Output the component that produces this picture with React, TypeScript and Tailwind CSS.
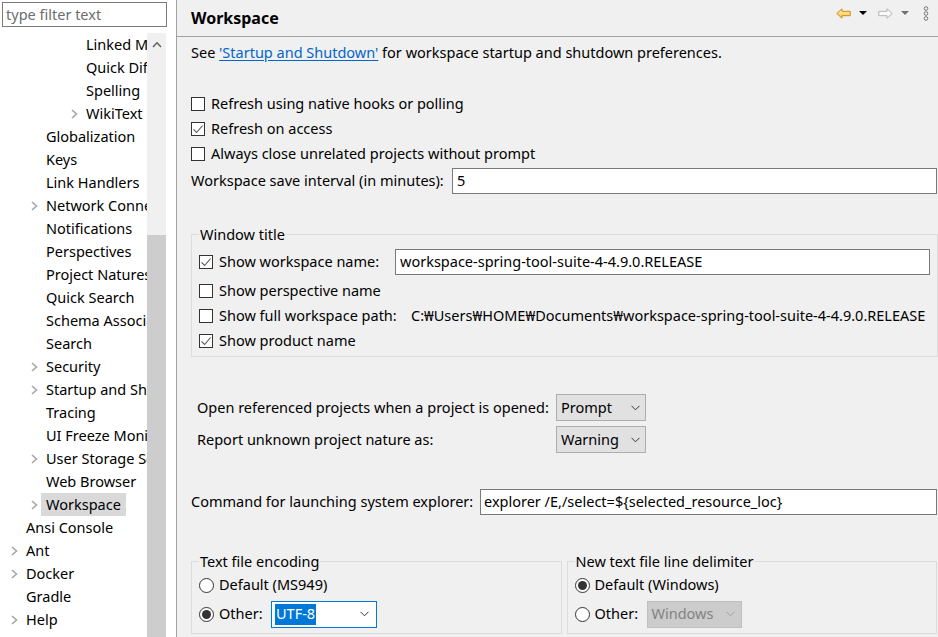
import React from 'react'

type Node = { label: string; level: 1 | 2 | 4; chevron?: boolean; selected?: boolean }

const tree: Node[] = [
  { label: 'Linked Mode', level: 4 },
  { label: 'Quick Diff', level: 4 },
  { label: 'Spelling', level: 4 },
  { label: 'WikiText', level: 4, chevron: true },
  { label: 'Globalization', level: 2 },
  { label: 'Keys', level: 2 },
  { label: 'Link Handlers', level: 2 },
  { label: 'Network Connections', level: 2, chevron: true },
  { label: 'Notifications', level: 2 },
  { label: 'Perspectives', level: 2 },
  { label: 'Project Natures', level: 2 },
  { label: 'Quick Search', level: 2 },
  { label: 'Schema Associations', level: 2 },
  { label: 'Search', level: 2 },
  { label: 'Security', level: 2, chevron: true },
  { label: 'Startup and Shutdown', level: 2, chevron: true },
  { label: 'Tracing', level: 2 },
  { label: 'UI Freeze Monitoring', level: 2 },
  { label: 'User Storage Service', level: 2, chevron: true },
  { label: 'Web Browser', level: 2 },
  { label: 'Workspace', level: 2, chevron: true, selected: true },
  { label: 'Ansi Console', level: 1 },
  { label: 'Ant', level: 1, chevron: true },
  { label: 'Docker', level: 1, chevron: true },
  { label: 'Gradle', level: 1 },
  { label: 'Help', level: 1, chevron: true },
  { label: 'Install/Update', level: 1, chevron: true },
]

const indent = { 1: 'pl-[6px]', 2: 'pl-[26px]', 4: 'pl-[66px]' }

function TreeChevron() {
  return (
    <svg width="7" height="10" viewBox="0 0 7 10">
      <polyline points="1,1 5.5,5 1,9" fill="none" stroke="#a6a6a6" strokeWidth="1.6" />
    </svg>
  )
}

function DownChevron({ color = '#333' }: { color?: string }) {
  return (
    <svg width="9" height="6" viewBox="0 0 9 6">
      <polyline points="0.5,0.8 4.5,4.8 8.5,0.8" fill="none" stroke={color} strokeWidth="1" />
    </svg>
  )
}

function Check({ checked }: { checked?: boolean }) {
  return (
    <span className="flex h-[14px] w-[14px] shrink-0 items-center justify-center border border-[#333] bg-white">
      {checked && (
        <svg width="12" height="12" viewBox="0 0 12 12">
          <polyline points="1.5,6.3 4.6,9.5 10.6,2.5" fill="none" stroke="#555" strokeWidth="1.1" />
        </svg>
      )}
    </span>
  )
}

function Radio({ checked }: { checked?: boolean }) {
  return (
    <span className="flex h-[15px] w-[15px] shrink-0 items-center justify-center rounded-full border border-[#333] bg-white">
      {checked && <span className="h-[9px] w-[9px] rounded-full bg-[#333]" />}
    </span>
  )
}

function CheckRow({ label, checked }: { label: string; checked?: boolean }) {
  return (
    <div className="flex h-[25px] items-center gap-[6px]">
      <Check checked={checked} />
      <span>{label}</span>
    </div>
  )
}

function Combo({ value }: { value: string }) {
  return (
    <div className="flex h-[27px] w-[90px] items-center justify-between border border-[#adadad] bg-[#e1e1e1] pl-[4px] pr-[5px]">
      <span>{value}</span>
      <DownChevron />
    </div>
  )
}

export default function App() {
  return (
    <div className="flex h-[637px] w-[938px] overflow-hidden bg-[#f0f0f0] font-['Noto_Sans',sans-serif] text-[14.5px] text-black">
      {/* Left: filter + tree */}
      <div className="flex w-[176px] shrink-0 flex-col bg-white">
        <div className="ml-[2px] mt-[2px] flex h-[25px] w-[165px] items-center border border-[#7a7a7a] px-[3px] text-[#6d6d6d]">
          type filter text
        </div>
        <div className="mt-[6px] flex min-h-0 flex-1">
          <div className="w-[147px] shrink-0 overflow-hidden whitespace-nowrap">
            {tree.map((n) => (
              <div key={n.label} className={`flex h-[23px] items-center ${indent[n.level]}`}>
                <span className="flex w-[20px] shrink-0 items-center pl-[5px]">{n.chevron && <TreeChevron />}</span>
                {n.selected ? (
                  <span className="-ml-[5px] flex h-full items-center bg-[#d9d9d9] px-[5px]">{n.label}</span>
                ) : (
                  <span>{n.label}</span>
                )}
              </div>
            ))}
          </div>
          {/* scrollbar */}
          <div className="flex w-[19px] shrink-0 flex-col bg-[#f0f0f0]">
            <div className="flex h-[22px] items-center justify-center">
              <svg width="10" height="7" viewBox="0 0 10 7">
                <polyline points="1,6 5,1.8 9,6" fill="none" stroke="#606060" strokeWidth="1.5" />
              </svg>
            </div>
            <div className="h-[180px]" />
            <div className="flex-1 bg-[#cdcdcd]" />
          </div>
        </div>
      </div>

      {/* Right: preference page */}
      <div className="flex min-w-0 flex-1 flex-col border-l border-[#a0a0a0]">
        <div className="flex h-[37px] shrink-0 items-center justify-between border-b border-[#a0a0a0] pl-[14px]">
          <span className="text-[16px] font-bold">Workspace</span>
          <div className="mt-[6px] flex h-[14px] items-center self-start pr-[9px]">
            <svg width="15" height="11" viewBox="0 0 15 11">
              <defs>
                <linearGradient id="bk" x1="0" y1="0" x2="0" y2="1">
                  <stop offset="0" stopColor="#fff2b8" />
                  <stop offset="1" stopColor="#f5c542" />
                </linearGradient>
              </defs>
              <path d="M0.8 5.5 L6 0.8 L6 3.3 L14.2 3.3 L14.2 7.7 L6 7.7 L6 10.2 Z" fill="url(#bk)" stroke="#c68a1c" strokeWidth="1" strokeLinejoin="round" />
            </svg>
            <svg className="ml-[8px]" width="8" height="4" viewBox="0 0 8 4">
              <path d="M0 0 L8 0 L4 4 Z" fill="#000" />
            </svg>
            <svg className="ml-[11px]" width="15" height="11" viewBox="0 0 15 11">
              <path d="M14.2 5.5 L9 0.8 L9 3.3 L0.8 3.3 L0.8 7.7 L9 7.7 L9 10.2 Z" fill="#fafafa" stroke="#b4b4b4" strokeWidth="1" strokeLinejoin="round" />
            </svg>
            <svg className="ml-[8px]" width="8" height="4" viewBox="0 0 8 4">
              <path d="M0 0 L8 0 L4 4 Z" fill="#707070" />
            </svg>
            <svg className="ml-[14px]" width="6" height="15" viewBox="0 0 6 15">
              <circle cx="3" cy="2.5" r="1.8" fill="none" stroke="#777" strokeWidth="1" />
              <circle cx="3" cy="7.5" r="1.8" fill="none" stroke="#777" strokeWidth="1" />
              <circle cx="3" cy="12.5" r="1.8" fill="none" stroke="#777" strokeWidth="1" />
            </svg>
          </div>
        </div>

        <div className="flex flex-col whitespace-nowrap pl-[14px] pr-[1px]">
          <div className="mt-[6px] flex h-[20px] items-center">
            See&nbsp;<span className="text-[#0066cc] underline underline-offset-2">'Startup and Shutdown'</span>&nbsp;for workspace startup and shutdown preferences.
          </div>

          <div className="mt-[28px] flex flex-col">
            <CheckRow label="Refresh using native hooks or polling" />
            <CheckRow label="Refresh on access" checked />
            <CheckRow label="Always close unrelated projects without prompt" />
          </div>

          <div className="mt-[2px] flex h-[26px] items-center">
            <span className="w-[261px] shrink-0">Workspace save interval (in minutes):</span>
            <div className="flex h-full flex-1 items-center border border-[#7a7a7a] bg-white px-[4px]">5</div>
          </div>

          <fieldset className="mt-[30px] border border-[#dcdcdc] px-[7px] pb-[3px] pt-[5px]">
            <legend className="h-[20px] px-[1px] leading-[20px]">Window title</legend>
            <div className="flex h-[26px] items-center">
              <div className="flex w-[196px] shrink-0 items-center gap-[6px]">
                <Check checked />
                <span>Show workspace name:</span>
              </div>
              <div className="flex h-[26px] w-[535px] items-center border border-[#7a7a7a] bg-white px-[4px]">
                workspace-spring-tool-suite-4-4.9.0.RELEASE
              </div>
            </div>
            <div className="mt-[3px] flex flex-col">
              <CheckRow label="Show perspective name" />
              <div className="flex h-[25px] items-center">
                <div className="flex w-[212px] shrink-0 items-center gap-[6px]">
                  <Check />
                  <span>Show full workspace path:</span>
                </div>
                <span>C:₩Users₩HOME₩Documents₩workspace-spring-tool-suite-4-4.9.0.RELEASE</span>
              </div>
              <CheckRow label="Show product name" checked />
            </div>
          </fieldset>

          <div className="ml-[6px] mt-[37px] grid grid-cols-[359px_90px] gap-y-[5px]">
            <div className="flex h-[27px] items-center">Open referenced projects when a project is opened:</div>
            <Combo value="Prompt" />
            <div className="flex h-[27px] items-center">Report unknown project nature as:</div>
            <Combo value="Warning" />
          </div>

          <div className="mt-[36px] flex h-[26px] items-center">
            <span className="w-[289px] shrink-0">Command for launching system explorer:</span>
            <div className="flex h-full flex-1 items-center border border-[#7a7a7a] bg-white px-[3px]">
              explorer /E,/select=${'{'}selected_resource_loc{'}'}
            </div>
          </div>

          <div className="mt-[36px] grid grid-cols-2 gap-x-[5px]">
            <fieldset className="border border-[#dcdcdc] px-[7px] pb-[5px] pt-[2px]">
              <legend className="h-[20px] px-[1px] leading-[20px]">Text file encoding</legend>
              <div className="flex h-[24px] items-center gap-[5px]">
                <Radio />
                <span>Default (MS949)</span>
              </div>
              <div className="mt-[3px] flex h-[28px] items-center">
                <div className="flex w-[72px] shrink-0 items-center gap-[5px]">
                  <Radio checked />
                  <span>Other:</span>
                </div>
                <div className="flex h-[27px] w-[106px] items-center justify-between border border-[#0078d7] bg-white pl-[3px] pr-[7px]">
                  <span className="flex h-[21px] items-center bg-[#0078d7] px-[1px] text-white">UTF-8</span>
                  <DownChevron />
                </div>
              </div>
            </fieldset>
            <fieldset className="border border-[#dcdcdc] px-[7px] pb-[5px] pt-[2px]">
              <legend className="h-[20px] px-[1px] leading-[20px]">New text file line delimiter</legend>
              <div className="flex h-[24px] items-center gap-[5px]">
                <Radio checked />
                <span>Default (Windows)</span>
              </div>
              <div className="mt-[3px] flex h-[28px] items-center">
                <div className="flex w-[72px] shrink-0 items-center gap-[5px]">
                  <Radio />
                  <span>Other:</span>
                </div>
                <div className="flex h-[27px] w-[95px] items-center justify-between border border-[#bfbfbf] bg-[#cccccc] pl-[4px] pr-[6px] text-[#838383]">
                  <span>Windows</span>
                  <DownChevron color="#a0a0a0" />
                </div>
              </div>
            </fieldset>
          </div>
        </div>
      </div>
    </div>
  )
}
